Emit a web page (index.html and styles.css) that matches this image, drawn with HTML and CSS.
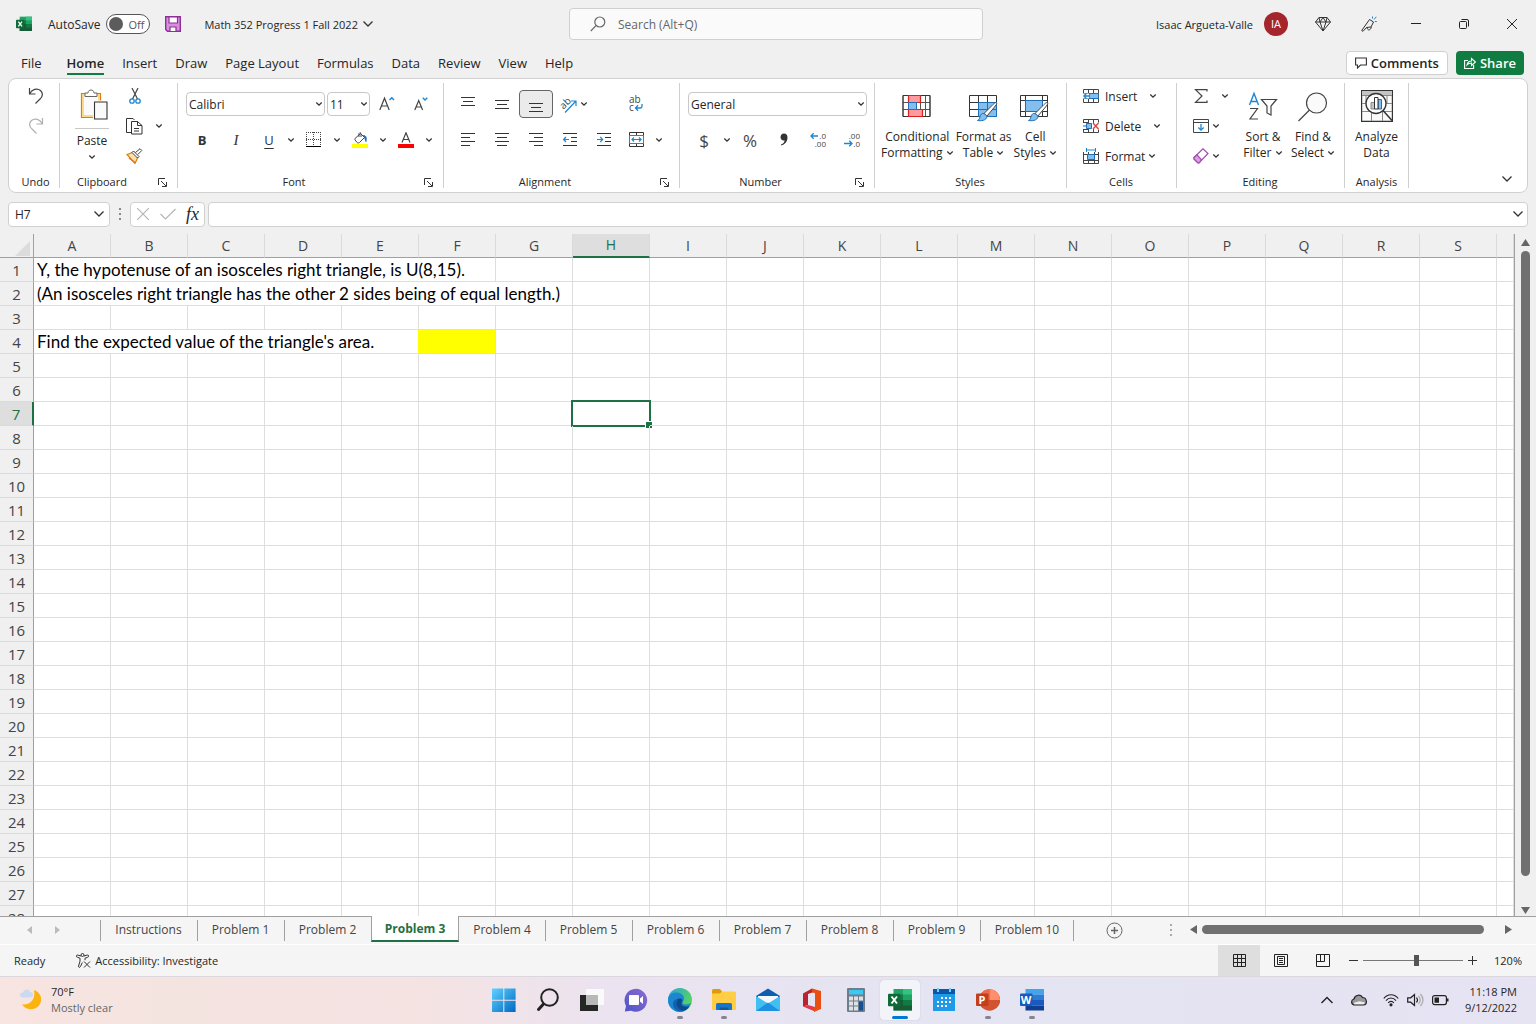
FILE: index.html
```html
<!DOCTYPE html>
<html lang="en">
<head>
    <meta charset="UTF-8">
    <meta name="viewport" content="width=device-width, initial-scale=1.0">
    <title>Math 352 Progress 1 Fall 2022 - Excel</title>
    <link rel="stylesheet" href="styles.css">
</head>
<body>
    <!-- shared icons -->
    <svg class="sprite" aria-hidden="true">
        <symbol id="chev" viewBox="0 0 8 6"><path d="M1.3 1.5 4 4.2l2.700-2.700" fill="none" stroke="#333" stroke-width="1.300"/></symbol>
        <symbol id="chev-lg" viewBox="0 0 12 8"><path d="M1.500 1.500 6 6l4.500-4.500" fill="none" stroke="#333" stroke-width="1.300"/></symbol>
        <symbol id="launch" viewBox="0 0 9 9"><path d="M.5 7V.5H7M3 3l5 5M8.500 4v4.500H4" fill="none" stroke="#333"/></symbol>
        <symbol id="brush" viewBox="0 0 22 20"><path d="M20.500.7c1 1-1 3-2 4.300L11 14l-3-2.500L15.500 4c1.500-1.500 4-4.300 5-3.300z" fill="#fff" stroke="#444"/><path d="M8 11.500l3 2.500c0 3-3 5.500-9.500 4.500 2-1 2-2 2.500-4s2-3.500 4-3z" fill="#83beec" stroke="#1e6fb8"/></symbol>
    </svg>

    <header class="titlebar">
        <div class="title-left">
            <svg class="excel" width="16" height="16" viewBox="0 0 24 22"><use href="#excel-logo"/></svg>
            <label class="autosave">AutoSave
                <input type="checkbox" role="switch">
                <span class="toggle"><span class="knob"></span>Off</span>
            </label>
            <button class="plain" aria-label="Save">
                <svg width="16" height="16" viewBox="0 0 16 16"><path d="M.7.700h14.600v14.600H2.500L.7 13.500z" fill="#d690dc" stroke="#8f2f9b" stroke-width="1.400"/><path d="M4 1h8.500v6H4zM5 11h6v4.500H5z" fill="#fff" stroke="#8f2f9b" stroke-width="1.200"/></svg>
            </button>
            <button class="plain docname">Math 352 Progress 1 Fall 2022 <svg width="12" height="8"><use href="#chev-lg"/></svg></button>
        </div>
        <label class="search">
            <svg width="16" height="16" viewBox="0 0 16 16" fill="none" stroke="#666" stroke-width="1.200"><circle cx="9.800" cy="6" r="5"/><path d="M6 9.700.8 15"/></svg>
            <input type="text" placeholder="Search (Alt+Q)">
        </label>
        <div class="title-right">
            <span class="user">Isaac Argueta-Valle</span>
            <span class="avatar">IA</span>
            <button class="plain w46" aria-label="Premium"><svg width="16" height="16" viewBox="0 0 16 16" fill="none" stroke="#333"><path d="M4 1.500h8l3.500 4.500L8 15 .5 6zM.5 6h15M4 1.500 5 6l3 9 3-9 1-4.500M5 6l3-4.500L11 6"/></svg></button>
            <button class="plain w46" aria-label="Coming soon"><svg width="16" height="16" viewBox="0 0 16 16" fill="none" stroke="#333"><path d="M8.500 3.500 12.500 6 10 11l-4.500.5L2 15.300.7 14.500zM6 11.300c0 3 3.500 4 4.300-.3"/><path d="M11.500 2.500V.5M13 3.500 15.300.8M13.800 5.500h2" stroke="#1b87d0"/></svg></button>
            <button class="plain w48" aria-label="Minimize"><svg width="10" height="10" viewBox="0 0 10 10"><path d="M0 4.500h10" stroke="#222"/></svg></button>
            <button class="plain w48" aria-label="Restore"><svg width="10" height="10" viewBox="0 0 10 10" fill="none" stroke="#222"><rect x=".5" y="2.500" width="7" height="7" rx="1"/><path d="M2.500.5H8q1.500 0 1.500 1.500v5.500"/></svg></button>
            <button class="plain w48" aria-label="Close"><svg width="10" height="10" viewBox="0 0 10 10" stroke="#222"><path d="M0 0l10 10M10 0 0 10"/></svg></button>
        </div>
    </header>

    <nav class="menubar">
        <button class="menu file">File</button>
        <button class="menu active">Home</button>
        <button class="menu">Insert</button>
        <button class="menu">Draw</button>
        <button class="menu">Page Layout</button>
        <button class="menu">Formulas</button>
        <button class="menu">Data</button>
        <button class="menu">Review</button>
        <button class="menu">View</button>
        <button class="menu">Help</button>
        <div class="menu-actions">
            <button class="comments"><svg width="12" height="12" viewBox="0 0 12 12" fill="none" stroke="#333" stroke-width="1.100"><path d="M.6 1h10.800v7H5.500l-3 3V8H.6z"/></svg>Comments</button>
            <button class="share"><svg width="12" height="12" viewBox="0 0 12 12" fill="none" stroke="#fff" stroke-width="1.100"><path d="M4 3.500H.6v8h9V8M3 8c.5-3 2-4 4.500-4V1.500l4 3.500-4 3.500V6C5.500 6 4.300 6.500 3 8z"/></svg>Share</button>
        </div>
    </nav>

    <section class="ribbon">
        <div class="group g-undo">
            <div class="body stack">
                <button class="plain" aria-label="Undo"><svg width="16" height="18" viewBox="0 0 16 18" fill="none" stroke="#444" stroke-width="1.200"><path d="M1.500 1v6h6M1.500 7C4 2.500 9 .5 12.500 3.500c3.500 3.500 1.500 6.500-.5 8.500l-4.500 4.500"/></svg></button>
                <button class="plain" aria-label="Redo"><svg width="16" height="18" viewBox="0 0 16 18" fill="none" stroke="#b0b0b0" stroke-width="1.200"><path d="M14.500 1v6h-6M14.500 7C12 2.500 7 .5 3.500 3.500 0 7 2 10 4 12l4.500 4.500"/></svg></button>
            </div>
            <div class="caption">Undo</div>
        </div>

        <div class="group g-clip">
            <div class="body">
                <button class="big paste">
                    <svg width="28" height="32" viewBox="0 0 28 32"><path d="M1.500 4.500h19v24h-19z" fill="#fff" stroke="#e07b10" stroke-width="1.200"/><path d="M3 6h16v21H3z" fill="#fafafa" stroke="#fbd98a" stroke-width="2"/><path d="M5 7.500V4h3c0-4 6-4 6 0h3v3.500z" fill="#fff" stroke="#666"/><path d="M13 11.500h15v20H13z" fill="#fff"/><path d="M14.500 13h12.500v17h-12.500z" fill="#fafafa" stroke="#333" stroke-width="1.100"/></svg>
                    <span class="rule"></span>
                    Paste
                    <svg width="8" height="6"><use href="#chev"/></svg>
                </button>
                <div class="stack clip-side">
                    <button class="plain" aria-label="Cut"><svg width="16" height="16" viewBox="0 0 16 16" fill="none"><path d="M5 0l5.500 11M11 0 5.500 11" stroke="#444" stroke-width="1.200"/><circle cx="5" cy="13" r="2.200" stroke="#1b87d0" stroke-width="1.300"/><circle cx="11" cy="13" r="2.200" stroke="#1b87d0" stroke-width="1.300"/></svg></button>
                    <button class="plain copy" aria-label="Copy"><svg width="17" height="17" viewBox="0 0 17 17" fill="none" stroke="#333"><path d="M5 14.500H.5V.5H7l1.500 1.500"/><path d="M5.500 3.500h6l4.500 4v8.500H5.500zM11.500 3.500v4H16M8 10.500h5M8 13h5"/></svg><svg width="8" height="6"><use href="#chev"/></svg></button>
                    <button class="plain" aria-label="Format Painter"><svg width="17" height="16" viewBox="0 0 17 16"><path d="M1 6.500 8 4l4 5-3 6.500z" fill="#fbe0b0" stroke="#e07b10" stroke-width="1.200"/><path d="M3 10l6 4.500" stroke="#e07b10" stroke-width="1.500"/><path d="M6 4.500 7.500 3l5.500 5.500L11.500 10zM9.500 4.500 14 .7l1.800 1.800-4 4" fill="#fff" stroke="#444"/></svg></button>
                </div>
            </div>
            <div class="caption">Clipboard<button class="launcher" aria-label="Clipboard settings"><svg width="9" height="9"><use href="#launch"/></svg></button></div>
        </div>

        <div class="group g-font">
            <div class="body rows">
                <div class="row">
                    <select class="combo fontname" aria-label="Font"><option>Calibri</option></select>
                    <select class="combo fontsize" aria-label="Font size"><option>11</option></select>
                    <button class="tool" aria-label="Increase font size"><svg width="16" height="16" viewBox="0 0 16 16" fill="none" stroke="#444" stroke-width="1.200"><path d="M.8 14 5.500 2.200 10.200 14M2.500 10h6"/><path d="M10.500 4 12.800 1.700 15 4" stroke="#1b87d0" stroke-width="1.400"/></svg></button>
                    <button class="tool" aria-label="Decrease font size"><svg width="14" height="16" viewBox="0 0 14 16" fill="none" stroke="#444" stroke-width="1.200"><path d="M.8 14 4.700 4.500 8.600 14M2.300 11h4.800"/><path d="M8.800 1.700 11 4l2.300-2.300" stroke="#1b87d0" stroke-width="1.400"/></svg></button>
                </div>
                <div class="row">
                    <button class="tool bold">B</button>
                    <button class="tool ital">I</button>
                    <button class="tool under">U</button>
                    <button class="drop" aria-label="Underline options"><svg width="8" height="6"><use href="#chev"/></svg></button>
                    <button class="tool" aria-label="Borders"><svg width="16" height="16" viewBox="0 0 16 16"><path d="M.5 0v14M14.500 0v14M7.500 0v14M0 .5h15M0 7.500h15" stroke="#444" stroke-dasharray="1 1"/><path d="M0 14.500h15" stroke="#000"/></svg></button>
                    <button class="drop" aria-label="Border options"><svg width="8" height="6"><use href="#chev"/></svg></button>
                    <button class="tool" aria-label="Fill color"><svg width="16" height="16" viewBox="0 0 16 16"><path d="M3 6.500 8.500 1.500l4 4-5 5c-1 .8-2 .5-2.600-.2L3 7.800q-.5-.6 0-1.300zM7 5V1.500q.8-1.800 2 0V5" fill="#fff" stroke="#444"/><path d="M11.500 3.500c3 0 3 3 2.500 6-.8-2-1-3.500-2.500-6z" fill="#1e6fb8" stroke="#1e6fb8"/><path d="M0 12h16v4H0z" fill="#ff0"/></svg></button>
                    <button class="drop" aria-label="Fill options"><svg width="8" height="6"><use href="#chev"/></svg></button>
                    <button class="tool" aria-label="Font color"><svg width="16" height="16" viewBox="0 0 16 16"><path d="M4 10.500 8 .8l4 9.700M5.300 7.500h5.400" fill="none" stroke="#444" stroke-width="1.200"/><path d="M0 12h16v4H0z" fill="#f00"/></svg></button>
                    <button class="drop" aria-label="Font color options"><svg width="8" height="6"><use href="#chev"/></svg></button>
                </div>
            </div>
            <div class="caption">Font<button class="launcher" aria-label="Font settings"><svg width="9" height="9"><use href="#launch"/></svg></button></div>
        </div>

        <div class="group g-align">
            <div class="body rows">
                <div class="row">
                    <button class="tool" aria-label="Top align"><svg width="14" height="16" viewBox="0 0 14 16" stroke="#333"><path d="M0 1.500h14M2 5.500h10M0 9.500h14"/></svg></button>
                    <button class="tool" aria-label="Middle align"><svg width="14" height="16" viewBox="0 0 14 16" stroke="#333"><path d="M0 4.500h14M2 8.500h10M0 12.500h14"/></svg></button>
                    <button class="tool pressed" aria-label="Bottom align"><svg width="14" height="16" viewBox="0 0 14 16" stroke="#333"><path d="M0 7.500h14M2 11.500h10M0 15.500h14"/></svg></button>
                    <button class="tool orient" aria-label="Orientation"><svg width="20" height="20" viewBox="0 0 20 20"><text x="1" y="13" class="ab" transform="rotate(-45 6 10)">ab</text><path d="M6 18.500 16.500 7.500M12 7h5v5" fill="none" stroke="#1b87d0" stroke-width="1.200"/></svg><svg width="8" height="6"><use href="#chev"/></svg></button>
                    <button class="tool" aria-label="Wrap text"><svg width="16" height="20" viewBox="0 0 16 20"><text x="1" y="9" class="ab">ab</text><text x="1" y="17" class="ab">c</text><path d="M14 10v2q0 2-1.500 2H7.500M10 11.300 7.500 14l2.500 2.700" fill="none" stroke="#1b87d0" stroke-width="1.300"/></svg></button>
                </div>
                <div class="row">
                    <button class="tool" aria-label="Align left"><svg width="14" height="14" viewBox="0 0 14 14" stroke="#333"><path d="M0 .5h14M0 4.500h9M0 8.500h14M0 12.500h9"/></svg></button>
                    <button class="tool" aria-label="Center"><svg width="14" height="14" viewBox="0 0 14 14" stroke="#333"><path d="M0 .5h14M2 4.500h10M0 8.500h14M2 12.500h10"/></svg></button>
                    <button class="tool" aria-label="Align right"><svg width="14" height="14" viewBox="0 0 14 14" stroke="#333"><path d="M0 .5h14M5 4.500h9M0 8.500h14M5 12.500h9"/></svg></button>
                    <button class="tool" aria-label="Decrease indent"><svg width="14" height="14" viewBox="0 0 14 14" fill="none" stroke="#333"><path d="M0 .5h14M8 4.500h6M8 8.500h6M0 12.500h14"/><path d="M6 6.500H1M3 4 .7 6.500 3 9" stroke="#1b87d0" stroke-width="1.200"/></svg></button>
                    <button class="tool" aria-label="Increase indent"><svg width="14" height="14" viewBox="0 0 14 14" fill="none" stroke="#333"><path d="M0 .5h14M8 4.500h6M8 8.500h6M0 12.500h14"/><path d="M0 6.500h5M3.300 4l2.300 2.500L3.300 9" stroke="#1b87d0" stroke-width="1.200"/></svg></button>
                    <button class="tool narrow" aria-label="Merge and center"><svg width="16" height="16" viewBox="0 0 16 16" fill="none" stroke="#333"><path d="M.5.5h14v14H.5zM7.500.5v3M7.500 12v3"/><path d="M.5 3.500h14v8H.5z" fill="#fff" stroke="#1b87d0"/><path d="M3 7.500h9M5 5.500l-2 2 2 2M10 5.500l2 2-2 2" stroke="#1b87d0" stroke-width="1.200"/></svg></button>
                    <button class="drop" aria-label="Merge options"><svg width="8" height="6"><use href="#chev"/></svg></button>
                </div>
            </div>
            <div class="caption">Alignment<button class="launcher" aria-label="Alignment settings"><svg width="9" height="9"><use href="#launch"/></svg></button></div>
        </div>

        <div class="group g-num">
            <div class="body rows">
                <div class="row">
                    <select class="combo numfmt" aria-label="Number format"><option>General</option></select>
                </div>
                <div class="row">
                    <button class="tool sym">$</button>
                    <button class="drop" aria-label="Currency options"><svg width="8" height="6"><use href="#chev"/></svg></button>
                    <button class="tool sym">%</button>
                    <button class="tool" aria-label="Comma style"><svg width="8" height="14" viewBox="0 0 8 14"><path d="M4 .5c2 0 3.500 1.500 3.500 4 0 4-2.500 7-6.500 8v-1c2.500-.8 3.600-2.400 3.600-4.200C2.500 8 .5 6.500.5 4.200.5 2 2 .5 4 .5z" fill="#333"/></svg></button>
                    <button class="tool" aria-label="Increase decimal"><svg width="18" height="20" viewBox="0 0 18 20"><text x="17" y="9" class="dec">.0</text><text x="17" y="17" class="dec">.00</text><path d="M9 6H2M4.700 3.200 2 6l2.700 2.800" fill="none" stroke="#1b87d0" stroke-width="1.300"/></svg></button>
                    <button class="tool" aria-label="Decrease decimal"><svg width="18" height="20" viewBox="0 0 18 20"><text x="17" y="9" class="dec">.00</text><text x="17" y="17" class="dec">.0</text><path d="M1 13.500h8M6.300 10.700 9 13.500l-2.700 2.800" fill="none" stroke="#1b87d0" stroke-width="1.300"/></svg></button>
                </div>
            </div>
            <div class="caption">Number<button class="launcher" aria-label="Number settings"><svg width="9" height="9"><use href="#launch"/></svg></button></div>
        </div>

        <div class="group g-styles">
            <div class="body">
                <button class="big">
                    <svg width="30" height="32" viewBox="0 0 30 32"><path d="M1 5.500h27v21H1zM1 12.500h27M1 19.500h27M6.500 5v22M18.500 5v22M23.500 5v22" fill="#fff" stroke="#555"/><path d="M1 5.500h27v21H1z" fill="none" stroke="#333"/><path d="M6.500 5.500h12v7h-12zM6.500 19.500h14v7h-14z" fill="#ff9a9f" stroke="#d8221f" stroke-width="1.200"/><path d="M6.500 12.500h8v7h-8z" fill="#83beec" stroke="#1e6fb8"/></svg>
                    Conditional<br>Formatting <svg width="8" height="6"><use href="#chev"/></svg>
                </button>
                <button class="big">
                    <svg width="30" height="32" viewBox="0 0 30 32"><path d="M.5 5.500h27v21H.5zM.5 12.500h27M.5 19.500h27M9.500 5v22M18.500 5v22" fill="#fff" stroke="#333"/><path d="M9.500 12.500h18v14h-18zM18.500 12.500v14M9.500 19.500h18" fill="#83beec" stroke="#1e6fb8"/><use href="#brush" x="7" y="12" width="22" height="20"/></svg>
                    Format as<br>Table <svg width="8" height="6"><use href="#chev"/></svg>
                </button>
                <button class="big">
                    <svg width="30" height="32" viewBox="0 0 30 32"><path d="M.5 5.500h27v21H.5zM.5 10.500h27M.5 21.500h27M5.500 5v22M22.500 5v22" fill="#fff" stroke="#333"/><path d="M5.500 10.500h17v11h-17z" fill="#83beec" stroke="#1e6fb8"/><use href="#brush" x="7" y="12" width="22" height="20"/></svg>
                    Cell<br>Styles <svg width="8" height="6"><use href="#chev"/></svg>
                </button>
            </div>
            <div class="caption">Styles</div>
        </div>

        <div class="group g-cells">
            <div class="body stack cells">
                <button class="plain line"><svg width="16" height="14" viewBox="0 0 16 14"><path d="M.5.5h15v13H.5zM.5 4.500h15M.5 9.500h15M5.500 0v14M10.500 0v14" fill="#fff" stroke="#444"/><path d="M6 4.500h9.500v5H6z" fill="#83beec" stroke="#1e6fb8"/><path d="M0 4.500h6v5H0z" fill="#fff"/><path d="M7 7H1M3.500 4.200.8 7l2.700 2.800" fill="none" stroke="#1b87d0" stroke-width="1.300"/></svg><span class="wide">Insert</span><svg width="8" height="6"><use href="#chev"/></svg></button>
                <button class="plain line"><svg width="16" height="14" viewBox="0 0 16 14"><path d="M.5 3.500v-3h15v3M.5 10.500v3h15v-3M5.500 0v4M10.500 0v4M5.500 10v4M10.500 10v4M0 3.500h6M0 10.500h6" fill="none" stroke="#444"/><path d="M3.500 4.500h5v5h-5zM0 7h3" fill="#83beec" stroke="#1e6fb8"/><path d="M10 4l5.500 6M15.500 4 10 10" stroke="#e0403c" stroke-width="1.300"/></svg><span class="wide">Delete</span><svg width="8" height="6"><use href="#chev"/></svg></button>
                <button class="plain line"><svg width="16" height="16" viewBox="0 0 16 16"><path d="M.5 4v11.500h15V4M.5 6.500h15M.5 12.500h15M5.500 4v12M11.500 4v12" fill="none" stroke="#444"/><path d="M4.500 6.500h7v5h-7z" fill="#83beec" stroke="#1e6fb8"/><path d="M3.500 0v4M12.500 0v4M3.500 2h9" stroke="#1b87d0"/></svg><span>Format</span><svg width="8" height="6"><use href="#chev"/></svg></button>
            </div>
            <div class="caption">Cells</div>
        </div>

        <div class="group g-edit">
            <div class="body">
                <div class="stack edit-side">
                    <button class="plain sum" aria-label="AutoSum"><svg width="16" height="14" viewBox="0 0 16 14"><path d="M14 2.500V.6H2.500L9 7l-6.500 6.400H14v-2" fill="none" stroke="#444" stroke-width="1.200"/></svg><svg width="8" height="6"><use href="#chev"/></svg></button>
                    <button class="plain" aria-label="Fill"><svg width="16" height="14" viewBox="0 0 16 14" fill="none"><path d="M.5.5h15v13H.5zM.5 3.500h15" stroke="#444"/><path d="M8 5v6M5.300 8.500 8 11.200l2.700-2.700" stroke="#1b87d0" stroke-width="1.300"/></svg><svg width="8" height="6"><use href="#chev"/></svg></button>
                    <button class="plain" aria-label="Clear"><svg width="16" height="16" viewBox="0 0 16 16"><path d="M1 9.500 10 .8l5 4.700-9 9.500H5L1 11z" fill="#fff" stroke="#a24bb0" stroke-width="1.200"/><path d="M1 9.500 4 6.800l4.500 5L6 15H5L1 11z" fill="#d9a0e0" stroke="#a24bb0" stroke-width="1.200"/></svg><svg width="8" height="6"><use href="#chev"/></svg></button>
                </div>
                <button class="big">
                    <svg width="30" height="32" viewBox="0 0 30 32" fill="none" stroke-width="1.200"><path d="M1.500 15 6 3.500 10.500 15M3 11.500h6" stroke="#1b87d0" stroke-width="1.400"/><path d="M2 18.500h7.500L2 29h8M13.500 9.500h15l-5.500 6.500v9l-4-2v-7z" stroke="#444"/></svg>
                    Sort &amp;<br>Filter <svg width="8" height="6"><use href="#chev"/></svg>
                </button>
                <button class="big">
                    <svg width="30" height="32" viewBox="0 0 30 32" fill="#fafafa" stroke="#444" stroke-width="1.200"><circle cx="18.500" cy="13" r="10"/><path d="M11.500 20 .5 31"/></svg>
                    Find &amp;<br>Select <svg width="8" height="6"><use href="#chev"/></svg>
                </button>
            </div>
            <div class="caption">Editing</div>
        </div>

        <div class="group g-analysis">
            <div class="body">
                <button class="big">
                    <svg width="32" height="32" viewBox="0 0 32 32"><path d="M.6.600h30.800v30.800H.6z" fill="#fafafa" stroke="#333" stroke-width="1.200"/><path d="M1 1h30v4.500H1z" fill="#c4c4c4"/><path d="M1 5.500h30M1 13.500h30M1 21.500h30M10.500 21v10M21.500 21v10M5 5v9M26 5v9" stroke="#888"/><circle cx="15" cy="13.500" r="10" fill="#fff" stroke="#333" stroke-width="1.300"/><path d="M22 20.500 31 30.500" stroke="#333" stroke-width="1.500"/><path d="M10 12.500h3.500V19H10z" fill="#c4c4c4" stroke="#888"/><path d="M17 9.500h3.500V19H17z" fill="#83beec" stroke="#1e6fb8"/><path d="M13.500 7.500H17V19h-3.500z" fill="#fff" stroke="#333"/></svg>
                    Analyze<br>Data
                </button>
            </div>
            <div class="caption">Analysis</div>
        </div>
        <button class="plain collapse" aria-label="Collapse ribbon"><svg width="12" height="8"><use href="#chev-lg"/></svg></button>
    </section>

    <div class="formulabar">
        <label class="namebox"><input type="text" value="H7" aria-label="Name box"><svg width="12" height="8"><use href="#chev-lg"/></svg></label>
        <svg class="grip" width="4" height="12" viewBox="0 0 4 12" fill="#888"><path d="M1 0h2v2H1zM1 5h2v2H1zM1 10h2v2H1z"/></svg>
        <div class="fx">
            <button class="plain" aria-label="Cancel"><svg width="12" height="12" viewBox="0 0 12 12" stroke="#b5b5b5" stroke-width="1.200"><path d="M0 0l12 12M12 0 0 12"/></svg></button>
            <button class="plain" aria-label="Enter"><svg width="16" height="12" viewBox="0 0 16 12" fill="none" stroke="#b5b5b5" stroke-width="1.200"><path d="M.5 6 5.500 11 15.500 1"/></svg></button>
            <button class="plain fxsign">fx</button>
        </div>
        <label class="formula"><input type="text" aria-label="Formula bar"><svg width="12" height="8"><use href="#chev-lg"/></svg></label>
    </div>

    <main class="sheet">
        <div class="grid">
            <table id="cells">
                <thead><tr><th class="corner"><svg width="15" height="15" viewBox="0 0 15 15"><path d="M15 0v15H0z" fill="#dcdcdc"/></svg></th></tr></thead>
                <tbody></tbody>
            </table>
        </div>
        <div class="vscroll">
            <svg width="9" height="7" viewBox="0 0 9 7"><path d="M4.500 0 9 7H0z" fill="#666"/></svg>
            <div class="vthumb"></div>
            <svg width="9" height="7" viewBox="0 0 9 7"><path d="M4.500 7 0 0h9z" fill="#666"/></svg>
        </div>
    </main>

    <div class="sheettabs">
        <div class="tabnav">
            <svg width="5" height="8" viewBox="0 0 5 8"><path d="M0 4l5-4v8z" fill="#bbb"/></svg>
            <svg width="5" height="8" viewBox="0 0 5 8"><path d="M5 4 0 0v8z" fill="#bbb"/></svg>
        </div>
        <button class="tab">Instructions</button>
        <button class="tab">Problem 1</button>
        <button class="tab">Problem 2</button>
        <button class="tab current">Problem 3</button>
        <button class="tab">Problem 4</button>
        <button class="tab">Problem 5</button>
        <button class="tab">Problem 6</button>
        <button class="tab">Problem 7</button>
        <button class="tab">Problem 8</button>
        <button class="tab">Problem 9</button>
        <button class="tab">Problem 10</button>
        <button class="plain newtab" aria-label="New sheet"><svg width="17" height="17" viewBox="0 0 17 17" fill="none" stroke="#666"><circle cx="8.500" cy="8.500" r="7.500"/><path d="M8.500 5v7M5 8.500h7" stroke-width="1.500"/></svg></button>
        <div class="hscroll">
            <svg class="hgrip" width="4" height="12" viewBox="0 0 4 12" fill="#aaa"><path d="M1 0h2v2H1zM1 5h2v2H1zM1 10h2v2H1z"/></svg>
            <svg width="7" height="9" viewBox="0 0 7 9"><path d="M0 4.500 7 0v9z" fill="#666"/></svg>
            <div class="hthumb"></div>
            <svg class="hend" width="7" height="9" viewBox="0 0 7 9"><path d="M7 4.500 0 0v9z" fill="#666"/></svg>
        </div>
    </div>

    <footer class="status">
        <span class="ready">Ready</span>
        <button class="plain access"><svg width="15" height="15" viewBox="0 0 15 15" fill="none" stroke="#333"><circle cx="6.500" cy="2" r="1.500"/><path d="M5 3 1.500 2C0 2 0 4 1.500 4.300L4 5.200v3l-1.500 5c0 1.500 1.500 1.500 2 .3l1.800-4M8 3l3.500-1c1.500 0 1.500 2 0 2.300L9 5.200v2M8 8.500l6 6M14 8.500l-6 6"/></svg>Accessibility: Investigate</button>
        <div class="views">
            <button class="view on" aria-label="Normal"><svg width="13" height="13" viewBox="0 0 13 13" fill="none" stroke="#222"><path d="M.5.5h12v12H.5zM4.500 0v13M8.500 0v13M0 4.500h13M0 8.500h13"/></svg></button>
            <button class="view" aria-label="Page layout"><svg width="14" height="13" viewBox="0 0 14 13" fill="none" stroke="#222"><path d="M.5.5h13v12H.5zM3.500 2.500h7v8h-7zM5 4.500h4M5 6.500h4M5 8.500h4"/></svg></button>
            <button class="view" aria-label="Page break preview"><svg width="14" height="13" viewBox="0 0 14 13" fill="none" stroke="#222"><path d="M.5.5h13v12H.5zM.5 7.500h8V0M4.500 0v7"/></svg></button>
            <button class="plain zoom" aria-label="Zoom out"><svg width="9" height="9" viewBox="0 0 9 9"><path d="M0 4.500h9" stroke="#333"/></svg></button>
            <input class="slider" type="range" min="0" max="100" value="54" aria-label="Zoom">
            <button class="plain zoom" aria-label="Zoom in"><svg width="9" height="9" viewBox="0 0 9 9"><path d="M0 4.500h9M4.500 0v9" stroke="#333"/></svg></button>
            <span class="percent">120%</span>
        </div>
    </footer>

    <footer class="taskbar">
        <div class="weather">
            <svg width="24" height="24" viewBox="0 0 24 24"><path d="M15 2c5 2 8 6 7 11-1 6-7 9-12 8-3-.5-5-2-7-4.500 8 1 14-5 12-14.500z" fill="#fbb30f"/><path d="M4 9.500c-4 0-4-5 0-5C5 1 10 .5 11 4c4 0 4 5.500 0 5.500z" fill="#c9daf2"/></svg>
            <div>70°F<br><span>Mostly clear</span></div>
        </div>
        <div class="dock">
            <button class="app" aria-label="Start"><svg width="24" height="24" viewBox="0 0 24 24"><path d="M0 .5h11.300v11.300H0zM12.300.5h11.300v11.300H12.300zM0 12.800h11.300v11.200H0zM12.300 12.800h11.300v11.200H12.300z" fill="url(#win)"/></svg></button>
            <button class="app" aria-label="Search"><svg width="24" height="24" viewBox="0 0 24 24" fill="none" stroke="#222"><circle cx="13.500" cy="9.500" r="8.300" stroke-width="2"/><path d="M7.500 16 2.500 21.500" stroke-width="3" stroke-linecap="round"/></svg></button>
            <button class="app" aria-label="Task view"><svg width="24" height="24" viewBox="0 0 24 24"><path d="M0 7h18v16H0z" fill="#262626"/><path d="M6 1h18v16H6z" fill="#fafafa"/><path d="M6 7h12v10H6z" fill="#b8b8b8"/></svg></button>
            <button class="app" aria-label="Chat"><svg width="24" height="24" viewBox="0 0 24 24"><path d="M12 .8a11.500 11.500 0 1 1-5 22L.8 23.500 2 18A11.500 11.500 0 0 1 12 .8z" fill="url(#chat)"/><rect x="5" y="7" width="10" height="10" rx="1" fill="#fff"/><path d="M16 10.500 19 8v8l-3-2.500z" fill="#fff"/></svg></button>
            <button class="app open" aria-label="Edge"><svg width="24" height="24" viewBox="0 0 24 24"><circle cx="12" cy="12" r="12" fill="url(#edge)"/><path d="M0 12C0 7 4 4.500 8.500 4.500c4 0 7.500 2.500 7.500 6 0 2-1.500 3-1.500 4 0 2.500 6 2.500 8.500 0C21 21 15 24 12 24 5 24 0 18 0 12z" fill="#1b87d0"/><path d="M8 12.500c0 6 4 9.500 9 10.300C9 25 5 20.500 5 16c0-3 2-4.500 4-5z" fill="#1260b0"/><path d="M9.500 11c2-1 5-.5 5 1.500 0 1-1 1.500-1 3 0 2.500 3 4 8 2.500-2 4-5 5-7 4.500-5-1-8-8-5-11.500z" fill="#0d4a8c"/></svg></button>
            <button class="app open" aria-label="File Explorer"><svg width="24" height="24" viewBox="0 0 24 24"><path d="M0 2.500Q0 1 1.500 1H8l2 2.500V8H0z" fill="#e09a0c"/><path d="M0 5.500h8l2-2h12.500Q24 3.500 24 5v17H0z" fill="#ffce45"/><path d="M4 22v-5.500q0-1.500 1.500-1.500h13q1.500 0 1.500 1.500V22z" fill="#1876c8"/><path d="M7.500 22v-1.500q0-1 1-1h7q1 0 1 1V22z" fill="#0f58a0"/></svg></button>
            <button class="app" aria-label="Mail"><svg width="24" height="24" viewBox="0 0 24 24"><path d="M0 8 12 .5 24 8v15H0z" fill="#0f5fb0"/><path d="M2 8h20v8H2z" fill="#f5f8fc"/><path d="M0 8l12 7.500L24 8v15H0z" fill="#40bff2"/><path d="M0 23 12 14.500 24 23z" fill="#1e90e0"/></svg></button>
            <button class="app" aria-label="Office"><svg width="24" height="24" viewBox="0 0 24 24"><path d="M3 5.500 12 .5l3 3-7 2.500v11L3 18.500z" fill="#b8232f"/><path d="M3 18.500 8 17l7 2v4.500z" fill="#e8364b"/><path d="M12 .5 21 3v18l-7 3v-4.500l1-.5V5l-3-.5z" fill="#e84e10"/></svg></button>
            <button class="app" aria-label="Calculator"><svg width="24" height="24" viewBox="0 0 24 24"><rect x="3" width="18" height="24" rx="1" fill="#6f7d8a"/><path d="M5 2h14v4.500H5z" fill="#3ac8f5"/><path d="M5 8.500h4v4H5zM10 8.500h4v4h-4zM15 8.500h4v4h-4zM5 13.500h4v4H5zM10 13.500h4v4h-4zM5 18.500h4v4H5zM10 18.500h4v4h-4z" fill="#dde1e5"/><path d="M15 13.500h4v9h-4z" fill="#124f93"/></svg></button>
            <button class="app focused" aria-label="Excel"><svg width="24" height="24" viewBox="0 0 24 22"><g id="excel-logo"><path d="M5.500 0H24v21.500H5.500z" fill="#21a366"/><path d="M15 0h9v5.500h-9z" fill="#33c481"/><path d="M5.500 5.500H15V11H5.500z" fill="#107c41"/><path d="M5.500 11H15v10.500H5.500zM15 11h9v10.500h-9z" fill="#185c37"/><path d="M15 11h9v5.500h-9z" fill="#107c41"/><rect y="4.700" width="12.500" height="12.500" rx="1" fill="#0e6b38"/><path d="M3.500 7.500 9 14.500M9 7.500 3.500 14.500" stroke="#fff" stroke-width="1.900"/></g></svg></button>
            <button class="app" aria-label="Calendar"><svg width="24" height="24" viewBox="0 0 24 24"><path d="M1 1h22v22H1z" fill="#1f9ae8"/><path d="M1 1h22v5H1z" fill="#0d56a5"/><path d="M5 0h2v4H5zM17 0h2v4h-2z" fill="#6cd3fb"/><path d="M9 9h2v2H9zM13 9h2v2h-2zM17 9h2v2h-2zM5 13h2v2H5zM9 13h2v2H9zM13 13h2v2h-2zM17 13h2v2h-2zM5 17h2v2H5zM9 17h2v2H9zM13 17h2v2h-2z" fill="#fff"/></svg></button>
            <button class="app open" aria-label="PowerPoint"><svg width="24" height="24" viewBox="0 0 24 24"><circle cx="13.500" cy="12" r="10.700" fill="#d35230"/><path d="M13.500 1.300A10.700 10.700 0 0 1 24 12H13.500z" fill="#ff8f6b"/><path d="M13.500 1.300V12H3A10.700 10.700 0 0 1 13.500 1.300z" fill="#ed6c47"/><rect y="5.500" width="12.500" height="12.500" rx="1" fill="#c43e1c"/><text x="6" y="16" class="logo">P</text></svg></button>
            <button class="app open" aria-label="Word"><svg width="24" height="24" viewBox="0 0 24 24"><path d="M5.500 1H24v5.500H5.500z" fill="#41a5ee"/><path d="M5.500 6.500H24V12H5.500z" fill="#2b7cd3"/><path d="M5.500 12H24v5.500H5.500z" fill="#185abd"/><path d="M5.500 17.500H24v5H5.500z" fill="#103f91"/><rect y="5.500" width="12.500" height="12.500" rx="1" fill="#185abd"/><text x="6" y="16" class="logo">W</text></svg></button>
        </div>
        <div class="tray">
            <svg width="14" height="10" viewBox="0 0 14 10"><path d="M1.500 8 7 2.500 12.500 8" fill="none" stroke="#222" stroke-width="1.400"/></svg>
            <svg class="cloud" width="16" height="12" viewBox="0 0 16 12"><path d="M4 11C0 11-.5 6 3 5c1-4.500 7-5 8.500-1.500C16 3.500 17 11 12.500 11z" fill="#999" stroke="#222" stroke-width="1.200"/><path d="M2.500 10.300Q3 8 6 8q3-1.500 5 0 3 0 3 1l-1.500 1.300z" fill="#eee"/></svg>
            <svg width="16" height="14" viewBox="0 0 16 14" fill="none" stroke="#222" stroke-width="1.200"><path d="M.8 5.500C4.500.500 11.500.500 15.200 5.500M3 7.700c2.800-3.600 7.200-3.600 10 0M5.200 9.800c1.600-2 4-2 5.600 0"/><circle cx="8" cy="11.800" r="1" fill="#222"/></svg>
            <svg width="17" height="14" viewBox="0 0 17 14" fill="none" stroke="#222" stroke-width="1.200"><path d="M.7 4.800h3L7.500 1.500v11L3.700 9.200h-3zM9.500 4.500q2 2.500 0 5"/><path d="M11.500 2.800q3.500 4.200 0 8.400M13.500 1q5 6 0 12" stroke="#aaa"/></svg>
            <svg width="17" height="12" viewBox="0 0 17 12"><rect x=".6" y="1.600" width="13.800" height="9" rx="2" fill="none" stroke="#222" stroke-width="1.200"/><path d="M2.500 3.500H7v5.300H2.500zM15 4.500h1.500v3H15z" fill="#222"/></svg>
            <div class="clock">11:18 PM<br>9/12/2022</div>
        </div>
        <svg class="sprite" aria-hidden="true">
            <linearGradient id="win" x1="0" y1="0" x2="1" y2="1"><stop offset="0" stop-color="#5fd3ff"/><stop offset="1" stop-color="#0067c5"/></linearGradient>
            <linearGradient id="chat" x1="0" y1="1" x2="1" y2="0"><stop offset="0" stop-color="#4a55c8"/><stop offset="1" stop-color="#8f6bd0"/></linearGradient>
            <linearGradient id="edge" x1="0" y1="0" x2="1" y2=".5"><stop offset="0" stop-color="#2aa0e0"/><stop offset="1" stop-color="#56d65c"/></linearGradient>
        </svg>
    </footer>

    <script>
        const columns = 'ABCDEFGHIJKLMNOPQRS'.split('');
        const rowCount = 28;
        // text that spills over the empty cells to its right
        const content = {
            A1: { text: 'Y, the hypotenuse of an isosceles right triangle, is U(8,15).', span: 6 },
            A2: { text: '(An isosceles right triangle has the other 2 sides being of equal length.)', span: 7 },
            A4: { text: "Find the expected value of the triangle's area.", span: 5 },
            F4: { className: 'yellow' },
            H7: { className: 'selected' }
        };

        const head = document.querySelector('#cells thead tr');
        columns.concat('').forEach(name => {
            const th = document.createElement('th');
            th.textContent = name;
            if (name === 'H') th.className = 'here';
            if (name === '') th.className = 'rest';
            head.appendChild(th);
        });

        const body = document.querySelector('#cells tbody');
        for (let r = 1; r <= rowCount; r++) {
            const tr = body.insertRow();
            const th = document.createElement('th');
            th.textContent = r;
            if (r === 7) th.className = 'here';
            tr.appendChild(th);
            for (let c = 0; c <= columns.length; c++) {
                const cell = content[columns[c] + r] || {};
                const td = tr.insertCell();
                td.textContent = cell.text || '';
                if (cell.className) td.className = cell.className;
                if (cell.span) {
                    td.colSpan = cell.span;
                    c += cell.span - 1;
                }
            }
        }
    </script>
</body>
</html>
```
FILE: styles.css
```css
* {
    box-sizing: border-box;
}
body {
    margin: 0;
    height: 100vh;
    display: flex;
    flex-direction: column;
    overflow: hidden;
    background: #f0f0f0;
    color: #262626;
    font-family: "Open Sans", "Noto Sans", sans-serif;
    font-size: 12px;
}
svg {
    flex: none;
}
button, input, select {
    font: inherit;
    color: inherit;
}
button {
    border: 0;
    padding: 0;
    background: none;
}
input:focus, select:focus {
    outline: none;
}
.sprite {
    position: absolute;
    width: 0;
    height: 0;
}
.plain {
    display: flex;
    align-items: center;
    justify-content: center;
}

/* title bar */
.titlebar {
    flex: none;
    height: 48px;
    padding-left: 16px;
    display: grid;
    grid-template-columns: 1fr 414px 1fr;
    align-items: center;
}
.title-left, .title-right, .autosave {
    display: flex;
    align-items: center;
    white-space: nowrap;
}
.autosave {
    margin: 0 15px 0 16px;
    gap: 6px;
}
.autosave input {
    position: absolute;
    opacity: 0;
}
.toggle {
    display: flex;
    align-items: center;
    gap: 5px;
    width: 44px;
    height: 20px;
    padding-left: 2px;
    border: 1px solid #555;
    border-radius: 10px;
    background: #fff;
    color: #555;
    font-size: 11px;
}
.knob {
    width: 14px;
    height: 14px;
    border-radius: 50%;
    background: #5c5c5c;
}
.docname {
    margin-left: 23px;
    gap: 4px;
    font-size: 11px;
}
.search {
    display: flex;
    align-items: center;
    gap: 12px;
    height: 32px;
    padding-left: 20px;
    border: 1px solid #d0d0d0;
    border-radius: 4px;
    background: #fafafa;
}
.search input {
    flex: 1;
    border: 0;
    padding: 0;
    background: none;
}
.search input::placeholder {
    color: #666;
}
.title-right {
    justify-content: flex-end;
    font-size: 11px;
}
.avatar {
    width: 24px;
    height: 24px;
    margin: 0 12px 0 11px;
    border-radius: 50%;
    background: #a4262c;
    color: #fff;
    line-height: 24px;
    text-align: center;
}
.w46 {
    width: 46px;
}
.w48 {
    width: 48px;
}

/* menu */
.menubar {
    flex: none;
    height: 30px;
    display: flex;
    align-items: center;
    padding: 0 12px 0 12px;
}
.menu {
    padding: 0 9px;
    height: 24px;
    font-size: 13px;
    white-space: nowrap;
}
.menu.file {
    margin-right: 7px;
}
.menu.active {
    font-weight: 600;
    background: linear-gradient(#107c41, #107c41) 9px 100% / calc(100% - 18px) 2px no-repeat;
}
.menu-actions {
    margin-left: auto;
    display: flex;
    gap: 8px;
}
.comments, .share {
    display: flex;
    align-items: center;
    gap: 4px;
    height: 24px;
    padding: 0 8px;
    border-radius: 4px;
    font-size: 13px;
    font-weight: 600;
}
.comments {
    background: #fff;
    border: 1px solid #d0d0d0;
}
.share {
    background: #107c41;
    color: #fff;
}

/* ribbon */
.ribbon {
    flex: none;
    position: relative;
    display: flex;
    height: 115px;
    margin: 0 8px;
    padding: 4px 0;
    border: 1px solid #d0d0d0;
    border-radius: 8px;
    background: #fff;
}
.group {
    display: flex;
    flex-direction: column;
    border-right: 1px solid #d0d0d0;
}
.g-undo { width: 51px; }
.g-clip { width: 118px; }
.g-font { width: 266px; }
.g-align { width: 236px; }
.g-num { width: 195px; }
.g-styles { width: 192px; }
.g-cells { width: 110px; }
.g-edit { width: 168px; }
.g-analysis { width: 64px; }
.body {
    flex: 1;
    min-height: 0;
    display: flex;
}
.caption {
    position: relative;
    height: 12px;
    line-height: 12px;
    font-size: 11px;
    text-align: center;
    padding-right: 33px;
}
.g-undo .caption {
    padding: 0 0 0 3px;
}
.g-analysis .caption {
    padding-right: 0;
}
.g-styles .caption, .g-cells .caption, .g-edit .caption {
    padding-right: 1px;
}
.launcher {
    position: absolute;
    right: 10px;
    bottom: 1px;
    display: flex;
}
.stack {
    display: flex;
    flex-direction: column;
    align-items: center;
    gap: 4px;
}
.stack .plain {
    height: 26px;
}
.g-undo .stack {
    padding-left: 4px;
}
.big {
    display: block;
    font-size: 12px;
    line-height: 16px;
    height: 78px;
    padding-top: 6px;
    white-space: nowrap;
    text-align: center;
}
.big > svg:first-child {
    display: block;
    margin: 0 auto 7px;
}
.big svg:last-child:not(:first-child) {
    vertical-align: 1px;
}
.paste {
    width: 64px;
    display: flex;
    flex-direction: column;
    align-items: center;
}
.paste > svg:first-child {
    margin: 0 0 7px 4px;
}
.rule {
    width: 34px;
    margin-bottom: 4px;
    border-top: 1px solid #c8c8c8;
}
.paste svg:last-child {
    margin-top: 5px;
}
.clip-side {
    align-items: flex-start;
    padding-left: 2px;
}
.clip-side .plain {
    min-width: 17px;
}
.copy {
    gap: 12px;
}
.rows {
    flex-direction: column;
    gap: 8px;
    padding: 7px 0 0 7px;
}
.row {
    display: flex;
    align-items: center;
    height: 28px;
}
.combo {
    appearance: none;
    height: 24px;
    border: 1px solid #c8c8c8;
    border-radius: 4px;
    padding: 0 2px;
    background: #fff url("data:image/svg+xml,%3Csvg xmlns='http://www.w3.org/2000/svg' width='8' height='6'%3E%3Cpath d='M1.3 1.500 4 4.200l2.700-2.700' fill='none' stroke='%23333' stroke-width='1.300'/%3E%3C/svg%3E") right 1px center no-repeat;
    font-size: 12px;
}
.fontname {
    width: 139px;
    margin: 0 2px 0 1px;
}
.fontsize {
    width: 43px;
}
.numfmt {
    width: 179px;
    margin-left: 1px;
}
.tool {
    display: flex;
    align-items: center;
    justify-content: center;
    width: 34px;
    height: 28px;
    font-size: 13px;
    color: #333;
}
.drop {
    display: flex;
    align-items: center;
    justify-content: center;
    width: 12px;
    height: 28px;
}
.bold {
    font-weight: 700;
}
.ital {
    font-family: "Liberation Serif", serif;
    font-style: italic;
    font-size: 15px;
}
.under {
    width: 32px;
    text-decoration: underline;
    text-underline-offset: 3px;
}
.narrow {
    width: 32px;
}
.pressed {
    border: 1px solid #666;
    border-radius: 4px;
    background: #ebebeb;
}
.orient {
    width: 66px;
    gap: 1px;
    justify-content: flex-start;
    padding-left: 6px;
}
.ab {
    font-size: 10px;
    fill: #444;
}
.dec {
    font-size: 8px;
    text-anchor: end;
    fill: #444;
}
.sym {
    font-size: 17px;
    color: #444;
}
.g-styles .body {
    padding-left: 6px;
    gap: 2px;
}
.cells {
    align-items: flex-start;
    padding-left: 16px;
}
.line {
    gap: 6px;
}
.line span {
    margin-right: -3px;
}
.line .wide {
    margin-right: 6px;
}
.edit-side {
    width: 64px;
    align-items: flex-start;
    padding-left: 16px;
}
.edit-side .plain {
    gap: 3px;
}
.edit-side .sum {
    gap: 12px;
}
.g-edit .big {
    width: 44px;
    margin-right: 6px;
}
.g-analysis .big {
    width: 100%;
}
.collapse {
    position: absolute;
    right: 14px;
    bottom: 9px;
}

/* formula bar */
.formulabar {
    flex: none;
    display: flex;
    align-items: center;
    height: 41px;
    padding: 1px 8px 0;
}
.namebox, .fx, .formula {
    display: flex;
    align-items: center;
    height: 25px;
    border: 1px solid #d0d0d0;
    border-radius: 4px;
    background: #fff;
}
.namebox input, .formula input {
    flex: 1;
    min-width: 0;
    border: 0;
    padding: 0 0 0 6px;
    background: none;
}
.namebox {
    width: 102px;
    padding-right: 4px;
}
.grip {
    margin: 0 8px;
}
.fx {
    width: 75px;
    padding: 0 5px 0 6px;
    justify-content: space-between;
}
.fxsign {
    font-family: "Liberation Serif", serif;
    font-style: italic;
    font-size: 18px;
}
.formula {
    flex: 1;
    margin-left: 3px;
    padding-right: 3px;
}

/* sheet */
.sheet {
    flex: 1;
    min-height: 0;
    display: flex;
}
.grid {
    flex: 1;
    min-width: 0;
    overflow: hidden;
    border-right: 1px solid #a0a0a0;
}
table {
    width: 100%;
    table-layout: fixed;
    border-collapse: separate;
    border-spacing: 0;
    background: #fff;
}
th {
    width: 77px;
    height: 24px;
    padding: 0;
    border-right: 1px solid #dadada;
    border-bottom: 1px solid #dadada;
    background: #f0f0f0;
    color: #444;
    font-weight: 400;
    font-size: 15px;
    line-height: 20px;
}
thead th {
    border-bottom-color: #a0a0a0;
    font-size: 14px;
}
th.rest {
    width: auto;
}
th.corner {
    width: 34px;
    text-align: right;
    padding-right: 3px;
}
.corner svg {
    vertical-align: bottom;
}
tbody th, th.corner {
    border-right-color: #a0a0a0;
}
thead th.here {
    background: #dedede;
    color: #1e7145;
    border-bottom: 2px solid #1e7145;
}
tbody th.here {
    background: #dedede;
    color: #1e7145;
    border-right: 2px solid #1e7145;
}
td {
    position: relative;
    height: 24px;
    padding: 0 0 0 3px;
    border-right: 1px solid #dedede;
    border-bottom: 1px solid #dedede;
    color: #000;
    font-family: Lato, sans-serif;
    font-size: 17px;
    line-height: 20px;
    white-space: nowrap;
}
.yellow {
    background: #ff0;
    box-shadow: -1px 0 #ff0;
}
.selected::before {
    content: "";
    position: absolute;
    inset: -2px;
    border: 2px solid #1e7145;
}
.selected::after {
    content: "";
    position: absolute;
    right: -3px;
    bottom: -3px;
    width: 6px;
    height: 6px;
    border: 1px solid #fff;
    border-width: 1px 0 0 1px;
    background: #1e7145;
}
.vscroll {
    width: 21px;
    display: flex;
    flex-direction: column;
    align-items: center;
    gap: 5px;
    padding: 5px 0 2px;
}
.vthumb {
    flex: 1;
    width: 9px;
    margin-bottom: 26px;
    border-radius: 5px;
    background: #707070;
}

/* sheet tabs */
.sheettabs {
    flex: none;
    display: flex;
    height: 29px;
    border-top: 1px solid #a0a0a0;
    border-bottom: 1px solid #fff;
    background: #f5f5f5;
}
.tabnav {
    width: 100px;
    display: flex;
    gap: 23px;
    padding: 9px 0 0 27px;
}
.tab {
    width: 87px;
    height: 25px;
    font-size: 12px;
    color: #444;
    white-space: nowrap;
    background: linear-gradient(#a0a0a0, #a0a0a0) 0 3px / 1px 21px no-repeat;
}
.tab:nth-child(2) {
    width: 97px;
}
.tab:nth-child(12) {
    width: 94px;
    background: linear-gradient(#a0a0a0, #a0a0a0) 0 3px / 1px 21px no-repeat, linear-gradient(#a0a0a0, #a0a0a0) 100% 3px / 1px 21px no-repeat;
}
.tab.current {
    width: 88px;
    margin-top: -1px;
    height: 26px;
    border: 1px solid #a0a0a0;
    border-width: 0 1px;
    border-bottom: 2px solid #1e7145;
    background: #fff;
    color: #1e7145;
    font-weight: 700;
}
.tab.current + .tab {
    width: 86px;
    background: none;
}
.newtab {
    margin-left: 32px;
    height: 26px;
}
.hscroll {
    margin-left: auto;
    width: 367px;
    display: flex;
    align-items: center;
    height: 25px;
    padding-right: 2px;
}
.hgrip {
    margin-right: 17px;
}
.hthumb {
    flex: 1;
    height: 9px;
    margin: 0 21px 0 5px;
    border-radius: 5px;
    background: #707070;
}
.hend {
    margin-right: 22px;
}

/* status bar */
.status {
    flex: none;
    display: flex;
    align-items: center;
    height: 31px;
    padding: 0 14px;
    background: #f5f5f5;
    font-size: 11px;
}
.access {
    gap: 4px;
    margin-left: 31px;
}
.views {
    display: flex;
    align-items: center;
    align-self: stretch;
    margin-left: auto;
}
.view {
    display: flex;
    align-items: center;
    justify-content: center;
    width: 42px;
    align-self: stretch;
}
.view.on {
    background: #dedede;
}
.zoom {
    width: 19px;
}
.slider {
    appearance: none;
    width: 100px;
    height: 12px;
    margin: 0;
    background: linear-gradient(#777, #777) 0 50% / 100% 1px no-repeat;
}
.slider::-webkit-slider-thumb {
    appearance: none;
    width: 5px;
    height: 11px;
    background: #555;
}
.percent {
    width: 40px;
    text-align: right;
}

/* taskbar */
.taskbar {
    flex: none;
    display: grid;
    grid-template-columns: 1fr auto 1fr;
    height: 48px;
    padding-bottom: 1px;
    border-top: 1px solid #dcd6de;
    background: linear-gradient(90deg, #f8e4e1 0%, #f4e4e0 12%, #f5e3e3 28%, #ece3ef 38%, #e4e4f2 60%, #e6e3f3 100%);
}
.weather {
    display: flex;
    align-items: center;
    gap: 8px;
    padding-left: 19px;
    font-size: 11px;
    line-height: 16px;
}
.weather span {
    color: #666;
}
.dock {
    display: flex;
    align-items: center;
    gap: 4px;
}
.app {
    position: relative;
    display: flex;
    align-items: center;
    justify-content: center;
    width: 40px;
    height: 40px;
    border-radius: 4px;
}
.focused {
    background: #f3f3fa;
    box-shadow: 0 0 1px #aaa;
}
.open::after, .focused::after {
    content: "";
    position: absolute;
    left: 17px;
    bottom: 1px;
    width: 6px;
    height: 3px;
    border-radius: 2px;
    background: #86848e;
}
.focused::after {
    left: 12px;
    width: 16px;
    background: #0078d4;
}
.logo {
    fill: #fff;
    font-size: 11px;
    font-weight: 700;
    text-anchor: middle;
}
.tray {
    display: flex;
    align-items: center;
    justify-content: flex-end;
    gap: 8px;
    padding-right: 19px;
}
.cloud {
    margin: 0 8px 0 9px;
}
.clock {
    width: 60px;
    font-size: 11px;
    line-height: 16px;
    text-align: right;
}
```
